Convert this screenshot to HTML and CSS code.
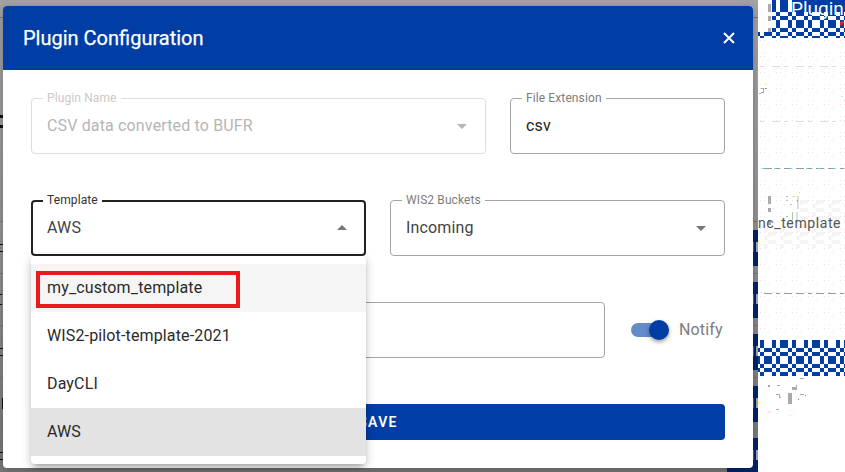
FILE: index.html
```html
<!DOCTYPE html>
<html lang="en">
<head>
<meta charset="utf-8">
<title>Plugin Configuration</title>
<link rel="stylesheet" href="styles.css">
</head>
<body>
<svg class="backdrop" width="845" height="472" viewBox="0 0 845 472" aria-hidden="true">
  <defs>
    <linearGradient id="shade" x1="0" y1="0" x2="0" y2="1"><stop offset="0" stop-color="#a3a3a3"/><stop offset=".5" stop-color="#929292"/><stop offset="1" stop-color="#777"/></linearGradient>
    <pattern id="checks" x="760" y="340" width="32" height="36" patternUnits="userSpaceOnUse">
      <path id="tile" fill="#003da5" d="M0 0h4v8H0zM12 0h4v8h-4zM20 0h8v8h-8zM4 8h8v4H4zM16 8h4v4h-4zM28 8h4v4h-4zM0 12h4v4H0zM12 12h4v4h-4zM20 12h8v4h-8zM4 16h8v8H4zM16 16h4v8h-4zM28 16h4v8h-4zM0 24h4v4H0zM12 24h4v4h-4zM20 24h8v4h-8zM4 28h8v4H4zM16 28h4v4h-4zM28 28h4v4h-4zM0 32h4v4H0zM12 32h4v4h-4zM20 32h8v4h-8z"/>
    </pattern>
    <pattern id="checks-top" x="760" y="4" width="32" height="36" patternUnits="userSpaceOnUse"><use href="#tile"/></pattern>
    <pattern id="dots" x="764" y="40" width="16" height="16" patternUnits="userSpaceOnUse">
      <path fill="#f7d9f5" d="M0 0h1v1H0zM12 0h1v1h-1z"/><path fill="#ece8ed" d="M0 12h1v1H0zM12 12h1v1h-1zM4 4h1v1H4z"/>
    </pattern>
    <pattern id="soft" x="0" y="0" width="16" height="8" patternUnits="userSpaceOnUse"><path fill="#f5f5f5" d="M0 0h8v4H0zM12 4h4v4h-4z"/></pattern>
  </defs>
  <path fill="url(#shade)" d="M0 0h758v472H0z"/>
  <path fill="#777" d="M0 17h3v1H0zM753 17h5v1h-5zM0 221h3v1H0zM0 273h3v1H0zM0 325h3v1H0zM0 377h3v1H0zM0 429h3v1H0zM753 221h5v1h-5z"/>
  <path fill="#111" d="M0 115h3v3H0zM0 125h3v3H0zM0 244h3v1H0zM0 251h3v1H0zM0 294h2v1H0zM0 304h2v1H0zM0 348h3v1H0zM0 355h3v1H0zM2 398h1v11H2zM0 452h3v1H0zM0 459h3v1H0z"/>
  <path fill="#002469" d="M727 230h31v36h-31zM727 282h31v36h-31zM727 334h31v36h-31zM727 386h31v36h-31zM727 438h31v34h-31z"/>
  <path fill="#747577" d="M753 273h5v1h-5zM753 325h5v1h-5zM753 377h5v1h-5zM753 429h5v1h-5z"/>
  <path fill="#a3a7b0" d="M756 242h2v10h-2zM756 294h2v10h-2zM756 346h2v10h-2zM756 398h2v10h-2zM756 450h2v10h-2z"/>
  <path fill="#755763" d="M753 242h1v10h-1zM753 294h1v10h-1zM753 346h1v10h-1zM753 398h1v10h-1zM753 450h1v10h-1z"/>
  <path fill="#fff" d="M758 0h87v472h-87z"/>
  <path fill="url(#dots)" d="M758 38h87v302h-87z"/>
  <path fill="url(#checks-top)" d="M772 0h73v38h-73zM758 32h14v6h-14z"/>
  <path fill="#003da5" d="M792 0h53v12h-53z"/>
  <path fill="url(#checks)" d="M758 340h87v36h-87z"/>
  <path fill="#aaa" d="M768 4h3v8h-3zM768 16h3v5h-3zM768 28h3v4h-3zM768 196h3v8h-3zM768 208h3v4h-3zM768 220h3v5h-3z"/>
  <path stroke="#ddd" stroke-dasharray="4 8 8 4" d="M760 66.500h85M760 121.500h85"/>
  <path stroke="#9a9a9a" stroke-dasharray="8 4 4 4 8 4" d="M764 168.500h81M764 293.500h81"/>
  <path fill="#52e8f3" d="M762 168h2v1h-2zM774 168h2v1h-2zM790 168h2v1h-2zM806 168h2v1h-2zM818 168h2v1h-2zM834 168h2v1h-2z"/>
  <path fill="#ee0" d="M761 292h1v1h-1zM773 292h1v1h-1zM785 292h1v1h-1zM805 292h1v1h-1zM817 292h1v1h-1zM829 292h1v1h-1zM766 84h1v1h-1zM773 208h1v1h-1zM793 196h2v1h-2zM799 192h1v1h-1z"/>
  <path fill="url(#soft)" d="M800 200h45v26h-45zM758 226h87v22h-87z"/>
  <path fill="#ddd" d="M797 196h2v13h-2zM796 212h2v11h-2z"/>
  <path fill="#a5cba5" d="M786 196h2v1h-2zM786 200h2v1h-2zM790 204h2v1h-2zM786 216h2v1h-2zM792 212h1v8h-1z"/>
  <path fill="none" stroke="#aaa" d="M759 93h2M761 88h2v4h-2M766 88h1M777 385h3M776 394h3v3h2M792 389h4v-4M800 378h4M776 409h3M797 200v2"/>
  <path fill="#aaa" d="M788 393h4v11h-4zM768 385h2v2h-2zM792 387h4v2h-4zM800 394h4v1h-4z"/>
  <path fill="#c5c" d="M798 399h1v1h-1zM765 88h1v1h-1zM805 395h1v1h-1z"/><path fill="#afa" d="M841 96h2v1h-2zM790 415h1v1h-1z"/>
  <path fill="#ff0" d="M758 240h1v1h-1zM758 402h1v2h-1z"/><path fill="#fbe6dc" d="M768 411h3v2h-3z"/>
  <text class="ghost-title" x="791" y="15">Plugin</text>
  <circle cx="842" cy="23" r="2" fill="#e41b2d"/>
  <text class="ghost-label" x="758" y="228">nc_template</text>
</svg>

<main class="dialog">
  <header class="bar"><h1>Plugin Configuration</h1>
    <svg class="close" width="12" height="12" viewBox="0 0 12 12"><path d="M1 1l10 10M11 1L1 11"/></svg>
  </header>
  <form class="form">
    <div class="row first">
      <fieldset class="field disabled"><legend>Plugin Name</legend><span>CSV data converted to BUFR</span><i class="arrow"></i></fieldset>
      <fieldset class="field input"><legend>File Extension</legend><span>csv</span></fieldset>
    </div>
    <div class="row second">
      <div class="select">
        <fieldset class="field active"><legend>Template</legend><span>AWS</span><i class="arrow up"></i></fieldset>
        <div class="menu">
          <div class="option hover"><span>my_custom_template</span></div>
          <div class="option">WIS2-pilot-template-2021</div>
          <div class="option">DayCLI</div>
          <div class="option selected">AWS</div>
        </div>
      </div>
      <fieldset class="field"><legend>WIS2 Buckets</legend><span>Incoming</span><i class="arrow"></i></fieldset>
    </div>
    <div class="row third">
      <div class="pattern"></div>
      <div class="switch"><span class="track"><span class="thumb"></span></span><span>Notify</span></div>
    </div>
    <button class="save" type="button">SAVE</button>
  </form>
</main>
</body>
</html>
```
FILE: styles.css
```css
* { box-sizing: border-box; }
body { margin: 0; width: 845px; height: 472px; padding: 6px 0 0 3px; overflow: hidden; background: #fff; font: 16px/24px Roboto, sans-serif; }
.backdrop { position: absolute; left: 0; top: 0; shape-rendering: crispEdges; }
.ghost-title { fill: #fff; font-size: 19px; }
.ghost-label { fill: #555; font-size: 14px; letter-spacing: .6px; }
.dialog { position: relative; width: 750px; height: 462px; background: #fff; border-radius: 4px; box-shadow: 0 2px 8px rgba(0,0,0,.25); clip-path: inset(-6px -5px -4px -3px); }
.bar { height: 64px; display: flex; align-items: center; justify-content: space-between; padding: 0 18px 0 20px; background: #003da5; color: #fff; border-radius: 4px 4px 0 0; }
h1 { margin: 0; font-size: 20px; font-weight: 400; line-height: 30px; -webkit-text-stroke: .25px #fff; }
.close { fill: none; stroke: #fff; stroke-width: 2; }
.form { padding: 28px 28px 0; }
.row { display: grid; column-gap: 24px; }
.first { grid-template-columns: 455px 215px; }
.second { grid-template-columns: 335px 335px; margin-top: 46px; }
.third { grid-template-columns: 574px 1fr; margin-top: 46px; }
.field { --line: #a4a4a4; position: relative; min-width: 0; height: 62px; margin: -6px 0 0; padding: 0 18px 0 11px; border: 1px solid var(--line); border-radius: 4px; display: flex; align-items: center; justify-content: space-between; color: #444; letter-spacing: .15px; }
.field > span { position: relative; top: -3px; padding-left: 4px; }
legend { height: 12px; font-size: 12px; line-height: 12px; padding: 0 4px; color: #7d7d7d; letter-spacing: .11px; }
.disabled { --line: #dedede; color: #b5b5b5; }
.disabled legend { color: #c9c9c9; }
.input { color: #222; }
.active { border: 2px solid #222; padding: 0 17px 0 10px; }
.active legend { height: 14px; color: #333; }
.arrow { position: relative; top: -2px; border: 5px solid transparent; border-top-color: #777; border-bottom: 0; }
.disabled .arrow { border-top-color: #b5b5b5; }
.arrow.up { top: -4px; border: 5px solid transparent; border-bottom-color: #777; border-top: 0; }
.select { position: relative; }
.menu { position: absolute; z-index: 2; top: 56px; left: 0; width: 335px; height: 208px; padding: 8px 0; background: #fff; border-radius: 4px; box-shadow: 0 5px 5px -3px rgba(0,0,0,.2), 0 3px 10px rgba(0,0,0,.25); color: #2a2a2a; letter-spacing: .14px; }
.option { height: 48px; line-height: 48px; padding-left: 16px; }
.hover { background: #f5f5f5; padding: 7px 0 0 5px; }
.hover span { display: block; width: 204px; height: 37px; border: 4px solid #e81a1d; padding-left: 7px; line-height: 25px; }
.selected { background: #e3e3e3; }
.pattern { height: 56px; border: 1px solid #a4a4a4; border-radius: 4px; }
.switch { display: flex; align-items: center; gap: 12px; color: #7d7d7d; padding-left: 2px; letter-spacing: .15px; }
.track { display: flex; width: 36px; height: 14px; border-radius: 7px; background: #668bc9; align-items: center; justify-content: flex-end; }
.thumb { width: 20px; height: 20px; flex: none; margin-right: -2px; border-radius: 50%; background: #003da5; box-shadow: 0 2px 4px rgba(0,0,0,.4); }
.save { display: block; width: 694px; height: 36px; margin-top: 46px; padding: 0; border: 0; border-radius: 4px; background: #003da5; color: #fff; font: 600 14px/36px Roboto, sans-serif; letter-spacing: 1.25px; }
```
